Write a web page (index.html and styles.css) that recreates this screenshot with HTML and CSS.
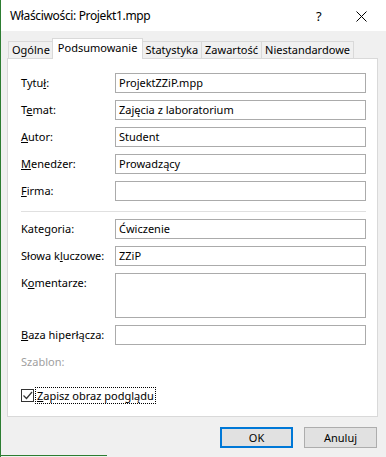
FILE: index.html
```html
<!DOCTYPE html>
<html lang="pl">
<head>
    <meta charset="UTF-8">
    <title>Właściwości: Projekt1.mpp</title>
    <link rel="stylesheet" href="styles.css">
</head>
<body>
    <div class="window">
        <div class="title-bar">
            <span class="title">Właściwości: Projekt1.mpp</span>
            <span class="title-help">?</span>
            <span class="title-close">
                <svg width="11" height="11" viewBox="0 0 11 11">
                    <path d="M0.5 0.5 L10.5 10.5 M10.5 0.5 L0.5 10.5" stroke="#000" stroke-width="1" fill="none"/>
                </svg>
            </span>
        </div>

        <div class="dialog-body">
            <div class="tabs">
                <div class="tab">Ogólne</div>
                <div class="tab active">Podsumowanie</div>
                <div class="tab">Statystyka</div>
                <div class="tab">Zawartość</div>
                <div class="tab">Niestandardowe</div>
            </div>

            <div class="panel">
                <div class="field">
                    <label>Tytu<u>ł</u>:</label>
                    <div class="input">ProjektZZiP.mpp</div>
                </div>
                <div class="field">
                    <label>T<u>e</u>mat:</label>
                    <div class="input">Zajęcia z laboratorium</div>
                </div>
                <div class="field">
                    <label><u>A</u>utor:</label>
                    <div class="input">Student</div>
                </div>
                <div class="field">
                    <label><u>M</u>enedżer:</label>
                    <div class="input">Prowadzący</div>
                </div>
                <div class="field">
                    <label><u>F</u>irma:</label>
                    <div class="input"></div>
                </div>

                <div class="separator"></div>

                <div class="field">
                    <label>Kate<u>g</u>oria:</label>
                    <div class="input">Ćwiczenie</div>
                </div>
                <div class="field">
                    <label>Słowa k<u>l</u>uczowe:</label>
                    <div class="input">ZZiP</div>
                </div>
                <div class="field">
                    <label>K<u>o</u>mentarze:</label>
                    <div class="input textarea"></div>
                </div>
                <div class="field">
                    <label><u>B</u>aza hiperłącza:</label>
                    <div class="input"></div>
                </div>
                <div class="field template">
                    <label class="disabled">Szablon:</label>
                </div>

                <div class="checkbox-row">
                    <span class="checkbox">
                        <svg width="11" height="11" viewBox="0 0 11 11">
                            <path d="M1.5 5.5 L4.5 8.5 L10 2" stroke="#333" stroke-width="1.2" fill="none"/>
                        </svg>
                    </span>
                    <span class="checkbox-label"><u>Z</u>apisz obraz podglądu</span>
                </div>
            </div>

            <div class="buttons">
                <button class="btn btn-default">OK</button>
                <button class="btn">Anuluj</button>
            </div>
        </div>

        <div class="bottom-edge"></div>
    </div>
</body>
</html>
```

FILE: styles.css
```css
* {
    margin: 0;
    padding: 0;
    box-sizing: border-box;
}

body {
    width: 386px;
    height: 457px;
    overflow: hidden;
    background: #f0f0f0;
    font-family: "Noto Sans", "Segoe UI", sans-serif;
    font-size: 11px;
    color: #000;
}

.window {
    height: 457px;
    border-left: 1px solid #2d7d32;
    display: flex;
    flex-direction: column;
}

/* title bar */

.title-bar {
    height: 31px;
    background: #fff;
    display: flex;
    align-items: center;
    padding-left: 9px;
    font-size: 12px;
    letter-spacing: -0.35px;
}

.title {
    flex: 1;
}

.title-help {
    width: 20px;
    margin-right: 20px;
    font-size: 13px;
}

.title-close {
    width: 30px;
    display: flex;
    padding-top: 1px;
}

/* body */

.dialog-body {
    flex: 1;
    padding: 7px 8px 0 6px;
}

.tabs {
    display: flex;
    align-items: flex-end;
    height: 20px;
    padding-left: 1px;
    position: relative;
    z-index: 1;
}

.tab {
    height: 17px;
    padding: 0 3px;
    border: 1px solid #d9d9d9;
    border-bottom: none;
    margin-left: -1px;
    background: #f0f0f0;
    line-height: 16px;
}

.tab:first-child {
    margin-left: 0;
}

.tab.active {
    height: 21px;
    margin-bottom: -1px;
    margin-left: -2px;
    margin-right: -1px;
    padding: 0 5px;
    background: #fff;
    line-height: 17px;
    position: relative;
}

.panel {
    height: 359px;
    background: #fff;
    border: 1px solid #d9d9d9;
    padding: 14px 11px 0 13px;
    display: flex;
    flex-direction: column;
    gap: 7px;
}

.field {
    display: flex;
    align-items: flex-start;
}

.field label {
    width: 94px;
    line-height: 20px;
}

.field label.disabled {
    color: #a0a0a0;
}

.input {
    flex: 1;
    height: 20px;
    border: 1px solid #ababab;
    padding: 0 3px;
    line-height: 18px;
    white-space: nowrap;
    overflow: hidden;
}

.input.textarea {
    height: 45px;
}

.separator {
    height: 1px;
    background: #e0e0e0;
    margin: 3px 0 0;
}

.field.template {
    height: 20px;
}

.checkbox-row {
    display: flex;
    align-items: center;
    margin-top: 9px;
}

.checkbox {
    width: 13px;
    height: 13px;
    border: 1px solid #333;
    display: flex;
    align-items: center;
    justify-content: center;
    margin-right: 2px;
}

.checkbox-label {
    padding: 0 1px;
    line-height: 15px;
    outline: 1px dotted #000;
    outline-offset: 0;
}

/* buttons */

.buttons {
    display: flex;
    justify-content: flex-end;
    gap: 11px;
    padding-top: 10px;
    padding-right: 1px;
}

.btn {
    width: 73px;
    height: 21px;
    background: #e1e1e1;
    border: 1px solid #adadad;
    font-family: inherit;
    font-size: 11px;
    color: #000;
}

.btn-default {
    border: 2px solid #0078d7;
}

.bottom-edge {
    height: 2px;
    width: 107px;
    border-top: 1px solid #2d7d32;
    margin-left: -1px;
}
```
